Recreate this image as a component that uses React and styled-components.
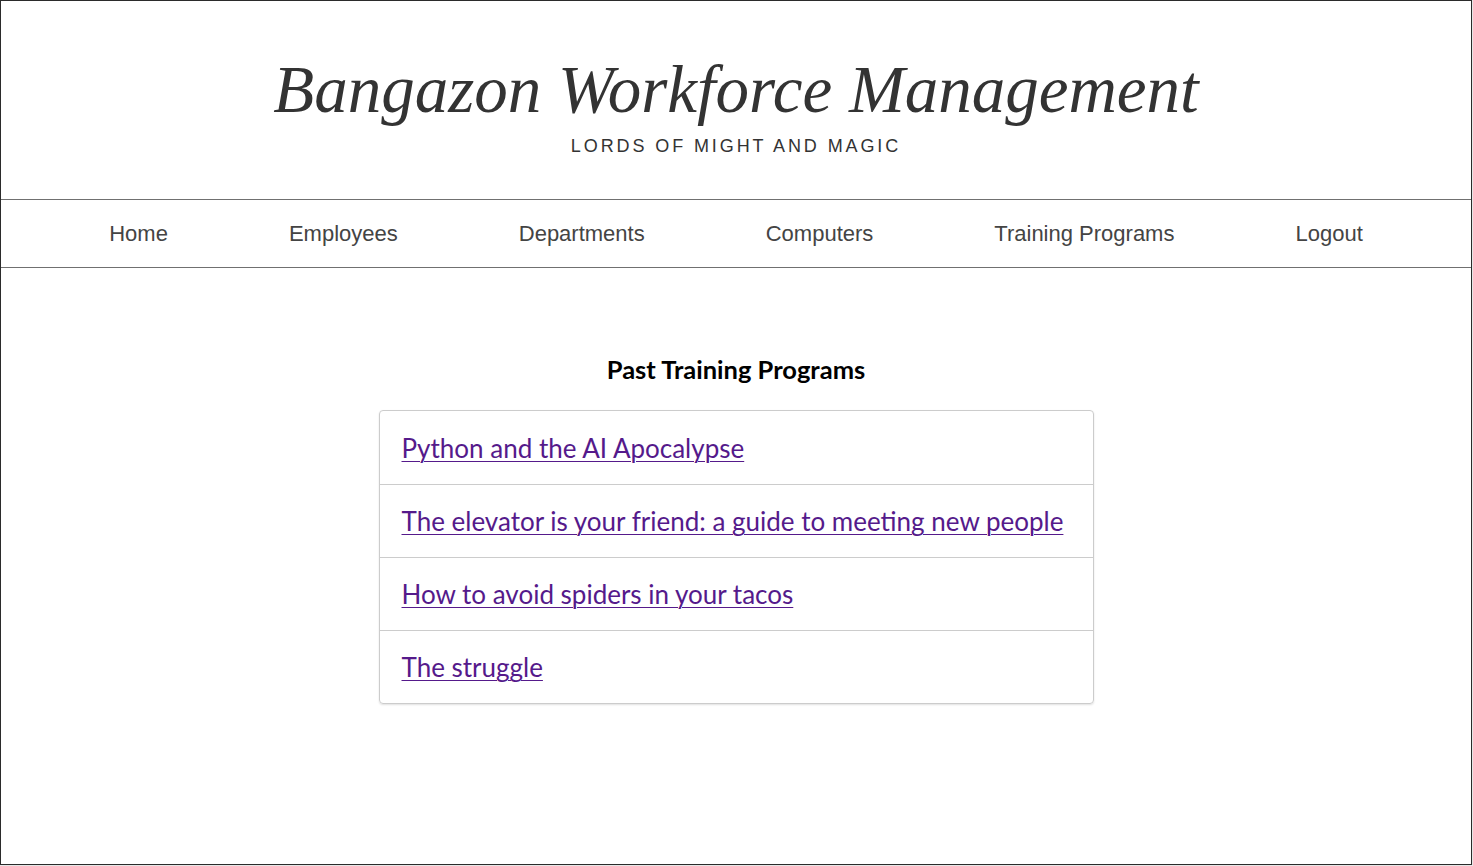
import React from 'react';
import styled, { createGlobalStyle } from 'styled-components';

const GlobalStyle = createGlobalStyle`
  html, body {
    margin: 0;
    padding: 0;
    background: #e6e6e6;
  }
  * {
    box-sizing: border-box;
  }
`;

const Frame = styled.div`
  width: 1472px;
  height: 865px;
  border: 1px solid #2b2b2b;
  background: #fff;
  display: flex;
  flex-direction: column;
`;

const Masthead = styled.header`
  height: 199px;
  border-bottom: 1px solid #707070;
  display: flex;
  flex-direction: column;
  align-items: center;
  padding-top: 52px;
`;

const Title = styled.h1`
  margin: 0;
  font-family: "Liberation Serif", "Times New Roman", serif;
  font-style: italic;
  font-weight: normal;
  font-size: 67px;
  line-height: 72px;
  color: #333;
`;

const Tagline = styled.p`
  margin: 11px 0 0;
  font-family: "Liberation Sans", Arial, sans-serif;
  font-size: 18px;
  letter-spacing: 2.9px;
  color: #333;
`;

const Nav = styled.nav`
  height: 68px;
  border-bottom: 1px solid #707070;
  display: flex;
  justify-content: center;
  align-items: center;
  gap: 121px;
`;

const NavLink = styled.a`
  font-family: "Liberation Sans", Arial, sans-serif;
  font-size: 22px;
  color: #444;
  text-decoration: none;
`;

const Main = styled.main`
  display: flex;
  flex-direction: column;
  align-items: center;
  padding-top: 86px;
`;

const Heading = styled.h2`
  margin: 0 0 26px;
  font-family: Lato, "Noto Sans", sans-serif;
  font-weight: bold;
  font-size: 25.5px;
  color: #000;
`;

const Card = styled.ul`
  list-style: none;
  margin: 0;
  padding: 0;
  width: 715px;
  border: 1px solid #ccc;
  border-radius: 4px;
  box-shadow: 0 1px 2px rgba(0, 0, 0, 0.12);
`;

const Row = styled.li`
  height: 73px;
  display: flex;
  align-items: center;
  padding-left: 22px;
  border-top: ${(p) => (p.first ? 'none' : '1px solid #ccc')};
`;

const ProgramLink = styled.a`
  font-family: Lato, "Noto Sans", sans-serif;
  font-size: 26px;
  color: #551a8b;
  text-decoration: underline;
  text-underline-offset: 3px;
  text-decoration-thickness: 1px;
`;

const navItems = ['Home', 'Employees', 'Departments', 'Computers', 'Training Programs', 'Logout'];

const programs = [
  'Python and the AI Apocalypse',
  'The elevator is your friend: a guide to meeting new people',
  'How to avoid spiders in your tacos',
  'The struggle',
];

export default function App() {
  return (
    <>
      <GlobalStyle />
      <Frame>
        <Masthead>
          <Title>Bangazon Workforce Management</Title>
          <Tagline>LORDS OF MIGHT AND MAGIC</Tagline>
        </Masthead>
        <Nav>
          {navItems.map((item) => (
            <NavLink key={item} href="#">
              {item}
            </NavLink>
          ))}
        </Nav>
        <Main>
          <Heading>Past Training Programs</Heading>
          <Card>
            {programs.map((name, i) => (
              <Row key={name} first={i === 0}>
                <ProgramLink href="#">{name}</ProgramLink>
              </Row>
            ))}
          </Card>
        </Main>
      </Frame>
    </>
  );
}
